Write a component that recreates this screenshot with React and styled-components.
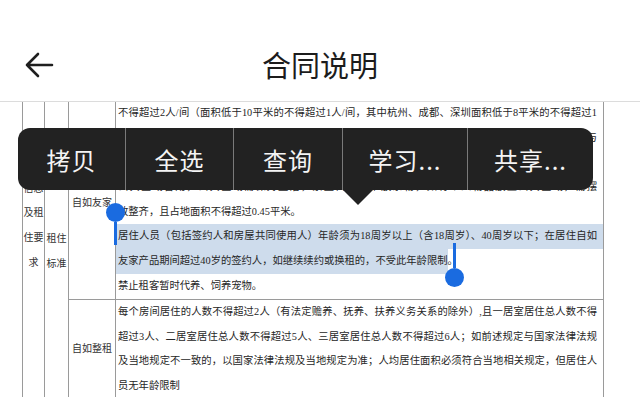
import React from "react";
import styled, { createGlobalStyle } from "styled-components";

const GlobalStyle = createGlobalStyle`
  html, body {
    margin: 0;
    padding: 0;
    background: #ffffff;
  }
  body {
    font-family: "Noto Sans CJK SC", "Noto Sans", sans-serif;
  }
`;

const BLUE = "#1a6be0";
const RULE = "#9a9a9a";
const LINE_H = 24.7;

const Screen = styled.div`
  position: relative;
  width: 640px;
  height: 397px;
  overflow: hidden;
  background: #ffffff;
`;

const Header = styled.header`
  display: grid;
  grid-template-columns: 1fr auto 1fr;
  align-items: center;
  box-sizing: border-box;
  height: 102px;
  padding-top: 28px;
  border-bottom: 1px solid #dcdcdc;
`;

const BackButton = styled.div`
  display: flex;
  align-items: center;
  padding-left: 24px;
  color: #1f1f1f;
`;

const Title = styled.h1`
  margin: 0;
  font-size: 29px;
  font-weight: 400;
  color: #1c1c1c;
  line-height: 1;
`;

const Doc = styled.div`
  height: 295px;
  overflow: hidden;
`;

const Table = styled.div`
  display: grid;
  grid-template-columns: 22px 24px 47px 489px;
  grid-template-rows: 198px 200px;
  margin-left: 22px;
`;

const Cell = styled.div`
  box-sizing: border-box;
  border-left: 1px solid ${RULE};
  border-right: ${(p) => (p.$last ? `1px solid ${RULE}` : "none")};
  border-bottom: ${(p) => (p.$divider ? `1px solid ${RULE}` : "none")};
  grid-row: ${(p) => (p.$span ? "1 / 3" : "auto")};
`;

const LabelCell = styled(Cell)`
  padding-top: ${(p) => p.$top}px;
  font-size: 10px;
  line-height: ${LINE_H}px;
  color: #333333;
  text-align: center;
  overflow: hidden;
`;

const TextCell = styled(Cell)`
  padding-top: ${(p) => p.$top || 0}px;
  font-family: "Liberation Serif", "Noto Sans CJK SC", serif;
  font-size: 10.3px;
  color: #262626;
`;

const Line = styled.div`
  box-sizing: border-box;
  height: ${LINE_H}px;
  line-height: ${LINE_H}px;
  padding: 0 6px 0 2px;
  overflow: hidden;
  text-align: justify;
  text-align-last: ${(p) => (p.$full ? "justify" : "left")};
  background: ${(p) => (p.$hl ? "#cedcec" : "transparent")};
`;

const Mark = styled.span`
  display: inline-block;
  height: ${LINE_H}px;
  margin-left: -2px;
  padding-left: 2px;
  background: #cedcec;
`;

const Menu = styled.div`
  position: absolute;
  left: 18px;
  top: 128px;
  display: flex;
  width: 575px;
  height: 62px;
  border-radius: 12px;
  background: #222222;
`;

const MenuItem = styled.div`
  display: flex;
  align-items: center;
  justify-content: center;
  box-sizing: border-box;
  width: ${(p) => p.$w}px;
  border-left: ${(p) => (p.$first ? "none" : "1px solid #7a7a7a")};
  color: #f4f4f4;
  font-size: 24px;
  letter-spacing: 1px;
`;

const MenuTail = styled.div`
  position: absolute;
  left: 325px;
  top: 62px;
  width: 0;
  height: 0;
  border-left: 15px solid transparent;
  border-right: 15px solid transparent;
  border-top: 15px solid #222222;
`;

const Handle = styled.div`
  position: absolute;
  left: ${(p) => p.$x}px;
  top: ${(p) => p.$y}px;
  display: flex;
  flex-direction: ${(p) => (p.$down ? "column-reverse" : "column")};
  align-items: center;
  width: 19px;
`;

const Knob = styled.div`
  width: 19px;
  height: 19px;
  border-radius: 50%;
  background: ${BLUE};
`;

const Stem = styled.div`
  width: 3px;
  height: ${(p) => p.$h}px;
  background: ${BLUE};
`;

const menuItems = [
  { label: "拷贝", w: 107 },
  { label: "全选", w: 108 },
  { label: "查询", w: 109 },
  { label: "学习...", w: 125 },
  { label: "共享...", w: 126 },
];

export default function App() {
  return (
    <Screen>
      <GlobalStyle />
      <Header>
        <BackButton>
          <svg width="30" height="28" viewBox="0 0 30 28" fill="none">
            <path
              d="M28 14H3M14 3L3 14L14 25"
              stroke="currentColor"
              strokeWidth="2.6"
              strokeLinecap="round"
              strokeLinejoin="round"
            />
          </svg>
        </BackButton>
        <Title>合同说明</Title>
        <div />
      </Header>

      <Doc>
        <Table>
          <LabelCell $span $top={49}>
            房屋
            <br />
            信息
            <br />
            及租
            <br />
            住要
            <br />求
          </LabelCell>
          <LabelCell $span $top={124}>
            租住
            <br />
            标准
          </LabelCell>
          <LabelCell $divider $top={88}>
            自如友家
          </LabelCell>
          <TextCell $divider $last style={{ marginTop: -1 }}>
            <Line $full>不得超过2人/间（面积低于10平米的不得超过1人/间，其中杭州、成都、深圳面积低于8平米的不得超过1</Line>
            <Line $full>人/间）；居住人员须如实登记，签约人应保证全部居住人员的身份信息真实、有效、合法，居住人员须与</Line>
            <Line>签约人同住，不得将房屋转租、分租给他人，不得在房屋内从事经营活动。</Line>
            <Line $full>公共区域合用，公共区域需保持整洁，禁止占用及堆放杂物，如有个人物品放置公共区域，需摆</Line>
            <Line>放整齐，且占地面积不得超过0.45平米。</Line>
            <Line $full $hl>居住人员（包括签约人和房屋共同使用人）年龄须为18周岁以上（含18周岁）、40周岁以下；在居住自如</Line>
            <Line>
              <Mark>友家产品期间超过40岁的签约人，如继续续约或换租的，不受此年龄限制</Mark>。
            </Line>
            <Line>禁止租客暂时代养、饲养宠物。</Line>
          </TextCell>
          <LabelCell $top={36}>自如整租</LabelCell>
          <TextCell $last>
            <Line $full>每个房间居住的人数不得超过2人（有法定赡养、抚养、扶养义务关系的除外）,且一居室居住总人数不得</Line>
            <Line $full>超过3人、二居室居住总人数不得超过5人、三居室居住总人数不得超过6人；如前述规定与国家法律法规</Line>
            <Line $full>及当地规定不一致的，以国家法律法规及当地规定为准；人均居住面积必须符合当地相关规定，但居住人</Line>
            <Line>员无年龄限制</Line>
          </TextCell>
        </Table>
      </Doc>

      <Menu>
        {menuItems.map((m, i) => (
          <MenuItem key={m.label} $w={m.w} $first={i === 0}>
            {m.label}
          </MenuItem>
        ))}
        <MenuTail />
      </Menu>

      <Handle $x={106} $y={203}>
        <Knob />
        <Stem $h={23} />
      </Handle>
      <Handle $x={445} $y={243} $down>
        <Knob />
        <Stem $h={25} />
      </Handle>
    </Screen>
  );
}
